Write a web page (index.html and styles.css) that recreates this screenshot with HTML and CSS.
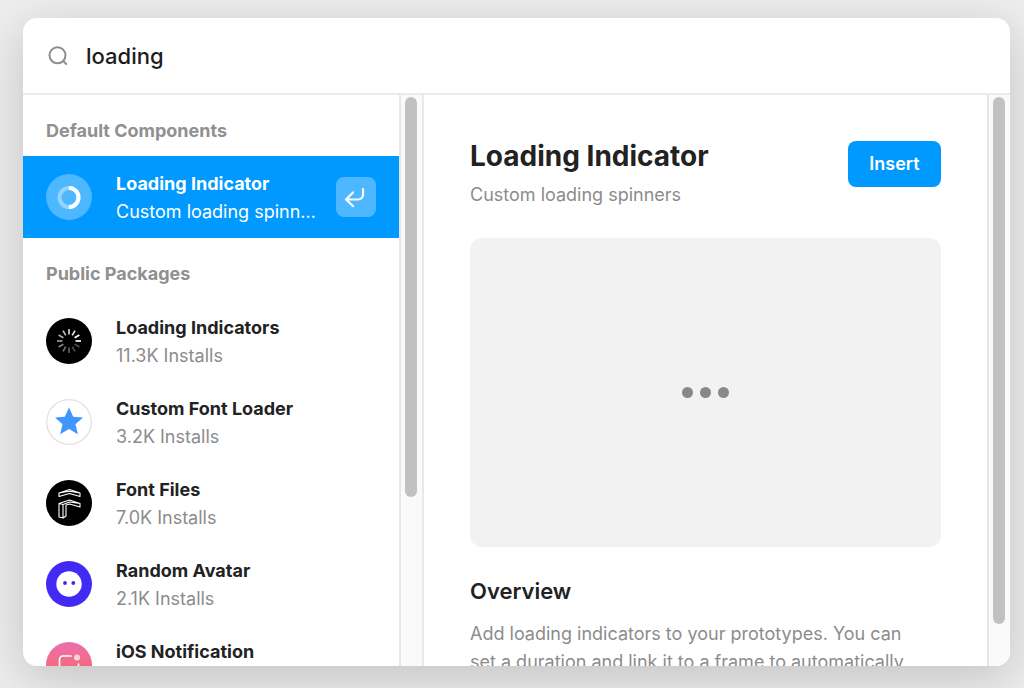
FILE: index.html
```html
<!DOCTYPE html>
<html lang="en">
<head>
<meta charset="utf-8">
<title>Insert Component</title>
<link rel="stylesheet" href="styles.css">
</head>
<body>
<main class="dialog">
  <div class="search">
    <svg class="search-icon" viewBox="0 0 20 20" width="20" height="20" fill="none" stroke="#8c8c8c" stroke-width="2" aria-hidden="true"><circle cx="9.5" cy="9.3" r="8"/><path d="M15.2 15l3.600 3.600"/></svg>
    <input class="search-input" type="text" value="loading" aria-label="Search components">
  </div>
  <div class="panes">
    <div class="list-pane">
      <div class="list">
        <h2 class="group-label">Default Components</h2>
        <div class="item item-active">
          <svg class="avatar" viewBox="0 0 46 46" aria-hidden="true"><circle cx="23" cy="23" r="23" fill="#fff" fill-opacity=".3"/><circle cx="23" cy="23.5" r="9.5" fill="none" stroke="#fff" stroke-opacity=".4" stroke-width="4"/><path d="M23 14a9.5 9.5 0 0 1 0 19" fill="none" stroke="#fff" stroke-width="4"/></svg>
          <div class="item-text"><div class="item-title">Loading Indicator</div><div class="item-sub">Custom loading spinners</div></div>
          <button class="enter" aria-label="Insert selected component"><svg viewBox="0 0 40 40" width="40" height="40" fill="none" stroke="#fff" stroke-width="2.200" stroke-linecap="round" stroke-linejoin="round" aria-hidden="true"><path d="M27 12v5.500a5 5 0 0 1-5 5H10.500M17 15.500l-7 7 7 6.500"/></svg></button>
        </div>
        <h2 class="group-label">Public Packages</h2>
        <div class="packages">
          <div class="item">
            <svg class="avatar" viewBox="0 0 46 46" aria-hidden="true"><circle cx="23" cy="23" r="23" fill="#000"/><g stroke="#fff" stroke-width="1.700"><path d="M29.500 23h5.500"/><path d="M29.500 23h5.500" transform="rotate(30 23 23)" opacity=".3"/><path d="M29.500 23h5.500" transform="rotate(60 23 23)" opacity=".3"/><path d="M29.500 23h5.500" transform="rotate(90 23 23)" opacity=".38"/><path d="M29.500 23h5.500" transform="rotate(120 23 23)" opacity=".45"/><path d="M29.500 23h5.500" transform="rotate(150 23 23)" opacity=".52"/><path d="M29.500 23h5.500" transform="rotate(180 23 23)" opacity=".6"/><path d="M29.500 23h5.500" transform="rotate(210 23 23)" opacity=".68"/><path d="M29.500 23h5.500" transform="rotate(240 23 23)" opacity=".75"/><path d="M29.500 23h5.500" transform="rotate(270 23 23)" opacity=".82"/><path d="M29.500 23h5.500" transform="rotate(300 23 23)" opacity=".9"/><path d="M29.500 23h5.500" transform="rotate(330 23 23)"/></g></svg>
            <div class="item-text"><div class="item-title">Loading Indicators</div><div class="item-sub">11.3K Installs</div></div>
          </div>
          <div class="item">
            <svg class="avatar" viewBox="0 0 46 46" aria-hidden="true"><circle cx="23" cy="23" r="22.300" fill="#fff" stroke="#e2e2e2" stroke-width="1.300"/><path d="M23 8.500l4.200 9.300 9.800.8-7.500 6.700 2.400 10L23 30l-8.900 5.300 2.400-10L9 18.600l9.800-.8z" fill="#4096fa"/></svg>
            <div class="item-text"><div class="item-title">Custom Font Loader</div><div class="item-sub">3.2K Installs</div></div>
          </div>
          <div class="item">
            <svg class="avatar" viewBox="0 0 46 46" aria-hidden="true"><circle cx="23" cy="23" r="23" fill="#000"/><g fill="none" stroke="#fff" stroke-width="1.100" stroke-linejoin="round"><path d="M13 13l10.500-3.500L34 13v3.500l-10.500-3L13 16.500zM13 13l10.500-1.800L34 13"/><path d="M13 23.500l10.500-3.500L34 23.500V27l-10.500-3-3.500 1v11l-3 2-4-1zM13 23.500l4 1 6.500-2.500L34 23.500M17 24.500V38"/></g></svg>
            <div class="item-text"><div class="item-title">Font Files</div><div class="item-sub">7.0K Installs</div></div>
          </div>
          <div class="item">
            <svg class="avatar" viewBox="0 0 46 46" aria-hidden="true"><circle cx="23" cy="23" r="23" fill="#4229f4"/><circle cx="23" cy="23" r="12.700" fill="#fff"/><circle cx="19" cy="22" r="1.900" fill="#4229f4"/><circle cx="27.300" cy="22" r="1.900" fill="#4229f4"/></svg>
            <div class="item-text"><div class="item-title">Random Avatar</div><div class="item-sub">2.1K Installs</div></div>
          </div>
          <div class="item">
            <svg class="avatar" viewBox="0 0 46 46" aria-hidden="true"><defs><linearGradient id="pink" x1="0" y1="0" x2="0" y2="1"><stop offset="0" stop-color="#e870b0"/><stop offset=".5" stop-color="#f56a80"/><stop offset="1" stop-color="#fa6a5c"/></linearGradient></defs><circle cx="23" cy="23" r="23" fill="url(#pink)"/><path d="M25 14h-8a3.500 3.500 0 0 0-3.500 3.500v10A3.500 3.500 0 0 0 17 31h12a3.500 3.500 0 0 0 3.500-3.500V22" fill="none" stroke="#fff" stroke-width="1.700" stroke-linecap="round"/><circle cx="31" cy="15.500" r="3" fill="#fff" fill-opacity=".7"/></svg>
            <div class="item-text"><div class="item-title">iOS Notification</div></div>
          </div>
        </div>
      </div>
      <div class="track"><div class="thumb thumb-list"></div></div>
    </div>
    <div class="detail-pane">
      <section class="detail">
        <div class="detail-head">
          <div class="detail-names">
            <h1 class="detail-title">Loading Indicator</h1>
            <p class="detail-sub">Custom loading spinners</p>
          </div>
          <button class="insert">Insert</button>
        </div>
        <div class="preview"><i class="dot"></i><i class="dot"></i><i class="dot"></i></div>
        <h2 class="overview">Overview</h2>
        <p class="copy">Add loading indicators to your prototypes. You can set a duration and link it to a frame to automatically</p>
      </section>
      <div class="track"><div class="thumb thumb-detail"></div></div>
    </div>
  </div>
</main>
</body>
</html>
```

FILE: styles.css
```css
* { box-sizing: border-box; margin: 0; }
body {
  height: 100vh;
  padding: 18px 14px 22px 23px;
  overflow: hidden;
  background: #ededed;
  font-family: Inter, "Liberation Sans", sans-serif;
  font-size: 18px;
  line-height: 28px;
  color: #222;
}
button, input { font: inherit; border: 0; }
.dialog {
  display: flex;
  flex-direction: column;
  height: 100%;
  overflow: hidden;
  border-radius: 14px;
  background: #fff;
  box-shadow: 0 12px 48px rgba(0, 0, 0, .18);
}
.search {
  display: flex;
  flex: none;
  align-items: center;
  gap: 18px;
  height: 77px;
  padding: 0 25px;
  border-bottom: 2px solid #ebebeb;
}
.search-input {
  flex: 1;
  padding: 0;
  outline: 0;
  background: none;
  font-size: 22px;
  font-weight: 500;
  color: #1c1c1c;
}
.panes { display: flex; flex: 1; min-height: 0; }
.list-pane { display: flex; flex: 0 0 401px; min-width: 0; border-right: 2px solid #e9e9e9; }
.list { flex: 1; min-width: 0; overflow: hidden; }
.group-label {
  height: 61px;
  padding: 22px 23px 0;
  font-size: 18px;
  font-weight: 700;
  color: #909090;
}
.packages { padding-top: 1px; }
.item { display: flex; align-items: center; height: 81px; padding: 0 23px; }
.item-active { height: 82px; background: #09f; color: #fff; }
.avatar { flex: none; width: 46px; height: 46px; margin-right: 24px; }
.item-text { flex: 1; min-width: 0; min-height: 58px; padding-top: 2px; }
.item-title { font-weight: 700; }
.item-sub { overflow: hidden; white-space: nowrap; text-overflow: ellipsis; color: #8c8c8c; }
.item-active .item-sub { color: #fff; }
.enter {
  flex: none;
  width: 40px;
  height: 40px;
  margin-left: 15px;
  padding: 0;
  border-radius: 8px;
  background: rgba(255, 255, 255, .3);
}
.enter svg { display: block; }
.track {
  flex: none;
  width: 23px;
  padding: 2px 5px 2px 4px;
  border-left: 2px solid #e6e6e6;
  background: #fafafa;
}
.thumb { width: 12px; border-radius: 6px; background: #c1c1c1; }
.thumb-list { height: 70.5%; }
.thumb-detail { height: 93%; }
.detail-pane { display: flex; flex: 1; min-width: 0; }
.detail { flex: 1; min-width: 0; padding: 46px 46px 0; overflow: hidden; }
.detail-head { display: flex; justify-content: space-between; align-items: flex-start; height: 97px; }
.detail-names { padding-top: 1px; }
.detail-title { font-size: 28px; font-weight: 700; }
.detail-sub { margin-top: 11px; color: #8c8c8c; }
.insert { width: 93px; height: 46px; padding: 0; border-radius: 8px; background: #09f; color: #fff; font-weight: 600; }
.preview {
  display: flex;
  align-items: center;
  justify-content: center;
  gap: 7px;
  aspect-ratio: 471 / 309;
  border-radius: 12px;
  background: #f2f2f2;
}
.dot { width: 11px; height: 11px; border-radius: 50%; background: #888; }
.overview { margin-top: 30px; font-size: 22px; font-weight: 600; }
.copy { margin-top: 15px; padding-right: 16px; color: #8c8c8c; }
```
